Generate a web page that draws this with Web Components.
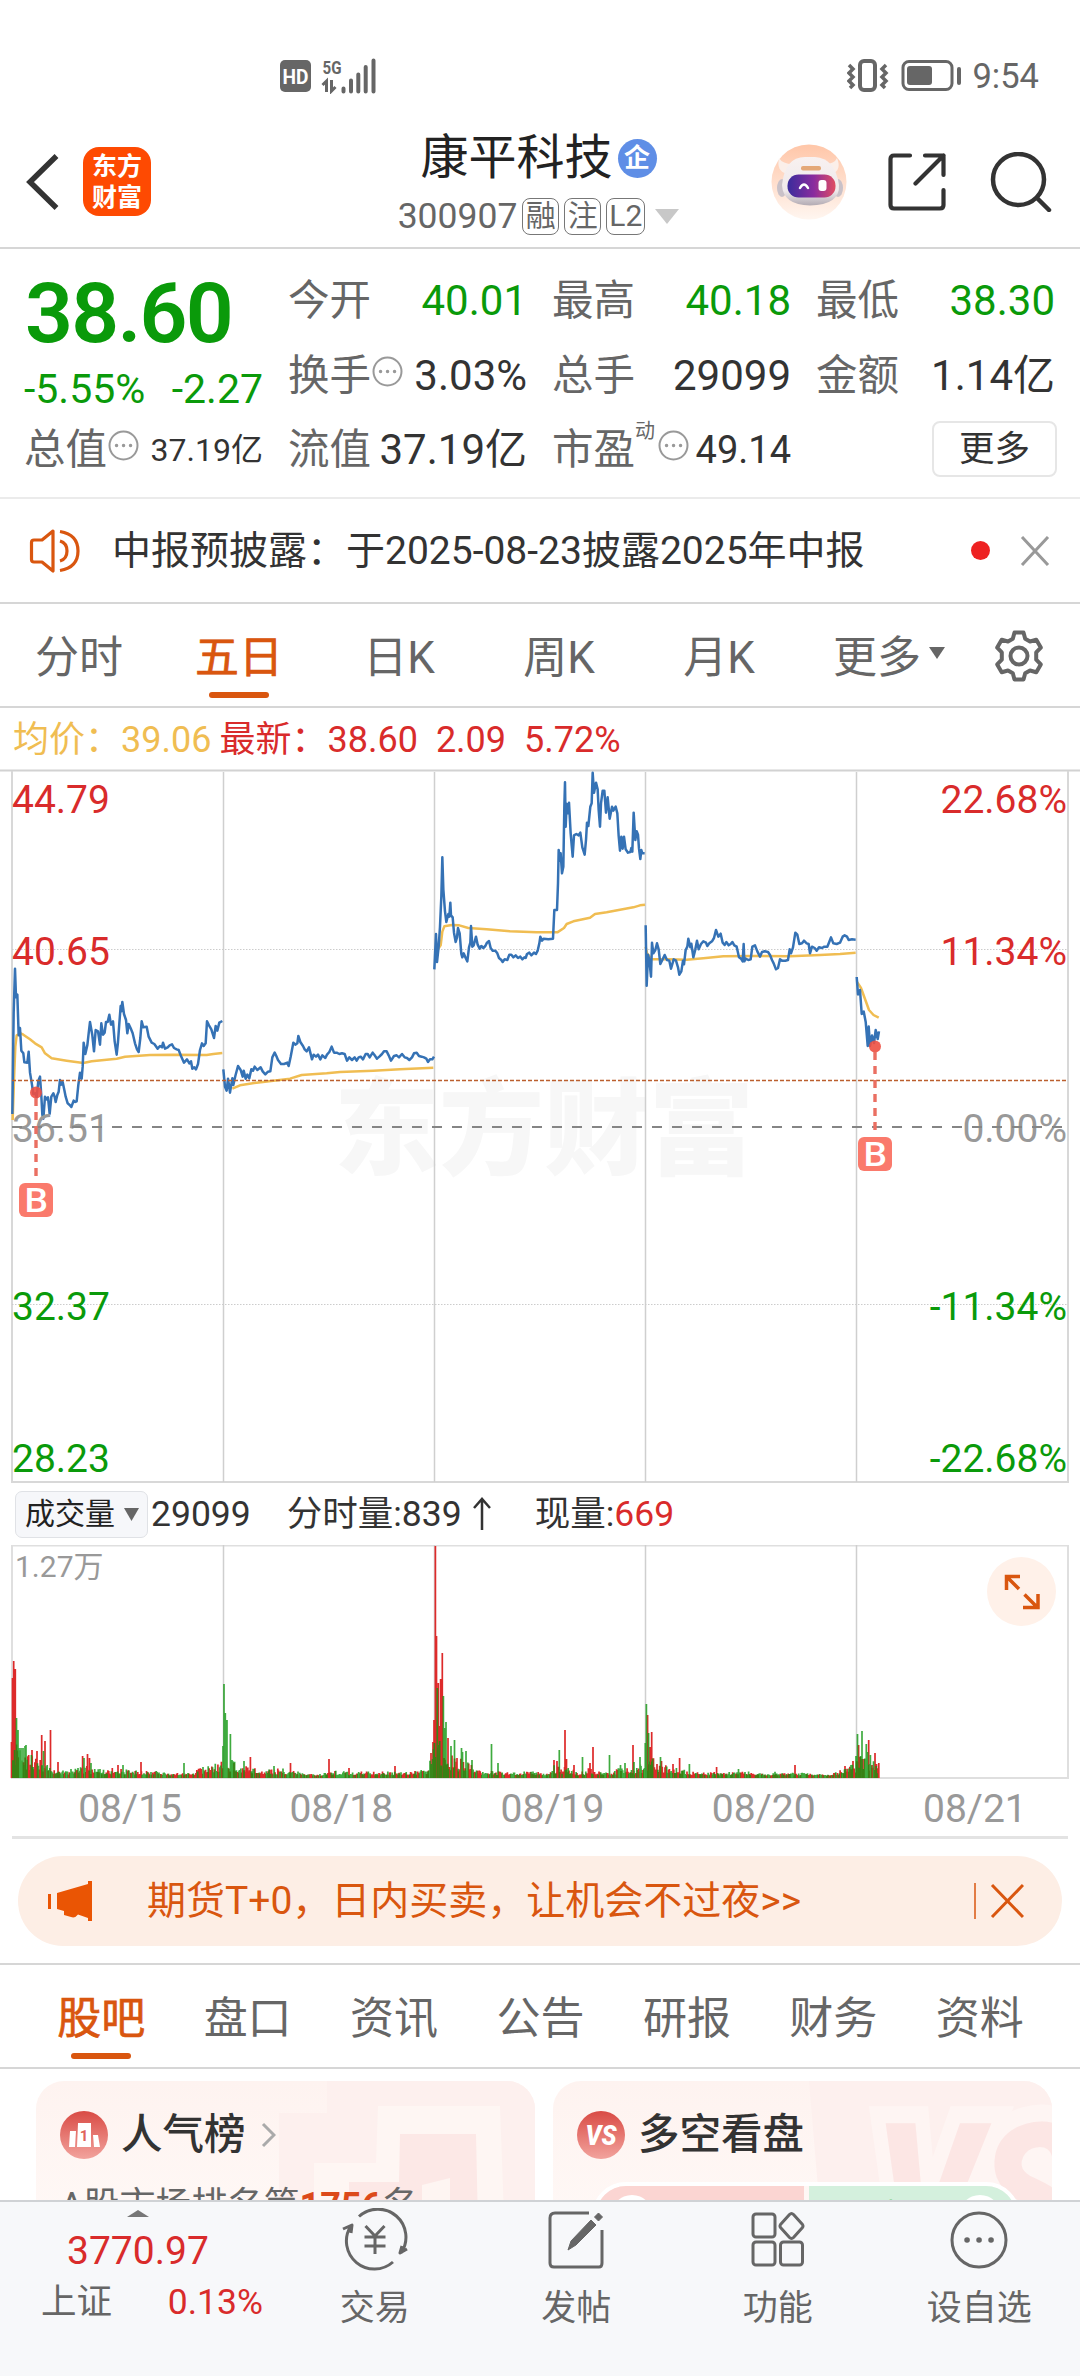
<!DOCTYPE html>
<html lang="zh-CN">
<head>
<meta charset="utf-8">
<title>康平科技 300907</title>
<style>
  :root {
    --up: #d92b2b;
    --down: #0a9a0a;
    --accent: #d9560f;
    --text: #333;
    --muted: #666;
    --faint: #999;
    --line: #d6d6d6;
    --avg: #f0bd52;
    --price: #3572b5;
  }
  body {
    margin: 0;
    width: 1080px;
    height: 2376px;
    overflow: hidden;
    display: flex;
    flex-direction: column;
    background: #fff;
    color: var(--text);
    font-family: Roboto, "Noto Sans CJK SC", sans-serif;
  }
  .cards {
    flex: 1;
    min-height: 0;
    overflow: hidden;
    display: flex;
    gap: 18px;
    padding: 12px 28px 0 36px;
  }
</style>
</head>
<body>
  <status-bar></status-bar>
  <stock-header code="300907">康平科技</stock-header>
  <quote-panel></quote-panel>
  <notice-bar>中报预披露：于2025-08-23披露2025年中报</notice-bar>
  <period-tabs></period-tabs>
  <price-chart></price-chart>
  <volume-chart></volume-chart>
  <promo-banner>期货T+0，日内买卖，让机会不过夜&gt;&gt;</promo-banner>
  <section-tabs></section-tabs>
  <section class="cards">
    <rank-card></rank-card>
    <versus-card></versus-card>
  </section>
  <market-nav></market-nav>

<script>
// Small helper: every element is a class with its own template and an open root.
function define(name, html, ready) {
  const template = document.createElement("template");
  template.innerHTML = html;

  customElements.define(
    name,
    class extends HTMLElement {
      connectedCallback() {
        if (this.shadowRoot) return;
        this.attachShadow({ mode: "open" });
        this.shadowRoot.appendChild(template.content.cloneNode(true));
        if (ready) ready(this, this.shadowRoot);
      }
    }
  );
}

define("status-bar", /* HTML */ `
  <style>
    :host {
      display: flex;
      justify-content: space-between;
      align-items: center;
      box-sizing: border-box;
      height: 120px;
      padding: 31px 41px 0 280px;
      color: var(--muted);
    }
    div { display: flex; align-items: center; }
    svg { display: block; }
    .right { gap: 10px; font-size: 34.500px; line-height: 40px; }
  </style>
  <div>
    <svg width="98" height="36" viewBox="0 0 98 36" fill="#666">
      <rect x="0" y="2" width="31" height="32" rx="5"/>
      <text x="15.5" y="25.500" font-size="20" font-weight="700" text-anchor="middle" fill="#fff" textLength="26" lengthAdjust="spacingAndGlyphs">HD</text>
      <text x="42.500" y="15.500" font-size="19" font-weight="700" textLength="19" lengthAdjust="spacingAndGlyphs">5G</text>
      <path d="M46.500 34V23l-4 4M51.500 22v11l4-4" fill="none" stroke="#666" stroke-width="3"/>
      <path d="M63.500 33.500v-3M71 33.500v-11M78.300 33.500v-17M85.700 33.500V9M93.500 33.500V2.500" stroke="#666" stroke-width="4" stroke-linecap="round"/>
    </svg>
  </div>
  <div class="right">
    <svg width="115" height="36" viewBox="0 0 115 36" fill="none" stroke="#666" stroke-width="3.500">
      <rect x="13" y="3" width="15" height="29" rx="4" stroke-width="4"/>
      <path d="M2 7l4 4-4 4 4 4-4 4 4 4-3 3M39 7l-4 4 4 4-4 4 4 4-4 4 3 3"/>
      <rect x="56" y="3.500" width="49" height="28" rx="6" stroke-width="3"/>
      <rect x="60" y="8" width="25" height="19" rx="3" fill="#666" stroke="none"/>
      <path d="M112 11v14" stroke-width="4" stroke-linecap="round"/>
    </svg>
    <span>9:54</span>
  </div>
`);

define("stock-header", /* HTML */ `
  <style>
    :host {
      display: grid;
      grid-template-columns: 1fr auto 1fr;
      box-sizing: border-box;
      height: 129px;
      padding: 0 28px 0 25px;
      border-bottom: 2px solid var(--line);
    }
    svg { display: block; }
    .side { display: flex; align-items: center; padding-bottom: 4px; }
    .right { justify-content: flex-end; }
    .logo {
      display: grid;
      place-content: center;
      width: 68px;
      height: 69px;
      margin-left: 24px;
      border-radius: 16px;
      background: #fe4a02;
      color: #fff;
      font-size: 25px;
      font-weight: 700;
      line-height: 31px;
    }
    .middle { padding: 8px 0 0 0; }
    .name, .meta { display: flex; align-items: center; justify-content: center; }
    .name { height: 60px; font-size: 48px; line-height: 60px; gap: 5px; color: #222; }
    .badge {
      width: 39px;
      height: 39px;
      border-radius: 50%;
      background: #5f8ee6;
      color: #fff;
      font-size: 26px;
      font-weight: 700;
      line-height: 38px;
      text-align: center;
    }
    .meta { height: 56px; gap: 5px; font-size: 35.500px; color: var(--muted); }
    .tag {
      box-sizing: border-box;
      height: 37px;
      min-width: 37px;
      border: 1.500px solid #777;
      border-radius: 8px;
      font-size: 30px;
      line-height: 34px;
      text-align: center;
      padding: 0 2px;
    }
  </style>
  <div class="side">
    <svg width="34" height="58" viewBox="0 0 34 58" fill="none" stroke="#333" stroke-width="5.500"><path d="M31.500 3L5 29l26.500 26"/></svg>
    <div class="logo"><span>东方</span><span>财富</span></div>
  </div>
  <div class="middle">
    <div class="name"><slot></slot><span class="badge">企</span></div>
    <div class="meta">
      <span class="code"></span><span class="tag">融</span><span class="tag">注</span><span class="tag">L2</span>
      <svg width="24" height="15" style="margin-left:5px"><path d="M0 0h24L12 15z" fill="#c8c8c8"/></svg>
    </div>
  </div>
  <div class="side right">
    <svg width="76" height="76" viewBox="0 0 76 76">
      <defs>
        <linearGradient id="halo" x2="0" y2="1"><stop offset="0" stop-color="#ffc6a8"/><stop offset="1" stop-color="#fff6f0"/></linearGradient>
        <linearGradient id="visor"><stop offset="0" stop-color="#3a2c9c"/><stop offset=".55" stop-color="#8a2c9e"/><stop offset="1" stop-color="#e04d62"/></linearGradient>
        <linearGradient id="shell" x2="0" y2="1"><stop offset="0" stop-color="#f8f1f0"/><stop offset=".7" stop-color="#efe9eb"/><stop offset="1" stop-color="#b3abb3"/></linearGradient>
      </defs>
      <circle cx="38" cy="38" r="37.500" fill="url(#halo)"/>
      <path d="M8 14q-3 13 8 16l9-10q-13 1-17-6zM66 14q5 12-5 16l-10-10q12 1 15-6z" fill="#fbefe9"/>
      <ellipse cx="11" cy="44" rx="5" ry="9" fill="#c9c1c8"/><ellipse cx="67" cy="44" rx="5" ry="9" fill="#c9c1c8"/>
      <path d="M11 41Q14 13 34 13h10q20 1 24 28 1 20-29 20.500Q12 61 11 41z" fill="url(#shell)"/>
      <rect x="30" y="22" width="20" height="4.500" rx="2" fill="#e4a878"/>
      <rect x="16.500" y="30.500" width="48" height="23" rx="11" fill="url(#visor)"/>
      <path d="M29 44q4-7 8 0" stroke="#fff" stroke-width="2.500" fill="none" stroke-linecap="round"/>
      <rect x="47.500" y="36" width="8" height="11" rx="3" fill="#fff"/>
    </svg>
    <svg width="58" height="58" viewBox="0 0 58 58" fill="none" stroke="#333" stroke-width="4.200" stroke-linecap="round" stroke-linejoin="round" style="margin-left:41px">
      <path d="M22 2.500H6Q2.500 2.500 2.500 6v46q0 3.500 3.500 3.500h46q3.500 0 3.500-3.500V37M37 2.500h18.500V22M55.500 2.500l-28 28"/>
    </svg>
    <svg width="62" height="60" viewBox="0 0 62 60" fill="none" stroke="#333" stroke-width="4.500" stroke-linecap="round" style="margin-left:44px">
      <circle cx="28.500" cy="27.500" r="25.500"/><path d="M47 46l12 12"/>
    </svg>
  </div>
`, (host, root) => {
  root.querySelector(".code").textContent = host.getAttribute("code");
});

define("info-dot", /* HTML */ `
  <style>
    :host { display: inline-block; width: 31px; height: 31px; }
    svg { display: block; }
  </style>
  <svg width="31" height="31" fill="none" stroke="#999" stroke-width="2">
    <circle cx="15.500" cy="15.500" r="14"/>
    <path d="M8.500 15.500h.1M15.500 15.500h.1M22.500 15.500h.1" stroke-width="3.400" stroke-linecap="round"/>
  </svg>
`);

define("quote-item", /* HTML */ `
  <style>
    :host { display: flex; align-items: center; font-size: 41.500px; line-height: 74px; white-space: nowrap; }
    .label { color: var(--muted); }
    sup { align-self: flex-start; font-size: 20px; line-height: 36px; margin-right: 2px; color: var(--muted); }
    info-dot { margin: -9px 0 0 1px; }
    .value { margin-left: auto; color: var(--value, var(--text)); font-size: var(--value-size, 42px); }
  </style>
  <span class="label"></span><span class="value"><slot></slot></span>
`, (host, root) => {
  const label = root.querySelector(".label");
  label.textContent = host.getAttribute("label");
  if (host.hasAttribute("hint")) label.after(document.createElement("info-dot"));
  if (host.hasAttribute("note")) {
    const sup = document.createElement("sup");
    sup.textContent = host.getAttribute("note");
    label.after(sup);
  }
});

define("quote-panel", /* HTML */ `
  <style>
    :host {
      display: grid;
      grid-template-columns: repeat(4, 239px);
      grid-template-rows: repeat(3, 74.500px);
      column-gap: 25px;
      box-sizing: border-box;
      height: 250px;
      padding: 15px 24px 0;
      border-bottom: 2px solid #ebebeb;
    }
    .now { grid-row: span 2; color: var(--down); }
    .price { font-size: 84px; font-weight: 600; line-height: 100px; letter-spacing: -1.800px; padding-left: 1px; }
    .change { display: flex; justify-content: space-between; font-size: 41px; line-height: 50px; }
    .down { --value: var(--down); }
    button {
      justify-self: end;
      align-self: center;
      width: 125px;
      height: 56px;
      margin-right: -2px;
      margin-top: -3px;
      padding: 0;
      border: 2px solid #e6e6e6;
      border-radius: 8px;
      background: #fff;
      color: var(--text);
      font: 35.500px/50px Roboto, "Noto Sans CJK SC", sans-serif;
    }
  </style>
  <div class="now">
    <div class="price">38.60</div>
    <div class="change"><span>-5.55%</span><span>-2.27</span></div>
  </div>
  <quote-item class="down" label="今开">40.01</quote-item>
  <quote-item class="down" label="最高">40.18</quote-item>
  <quote-item class="down" label="最低">38.30</quote-item>
  <quote-item label="换手" hint>3.03%</quote-item>
  <quote-item label="总手">29099</quote-item>
  <quote-item label="金额">1.14亿</quote-item>
  <quote-item label="总值" hint style="--value-size:32px">37.19亿</quote-item>
  <quote-item label="流值">37.19亿</quote-item>
  <quote-item label="市盈" note="动" hint style="--value-size:38px">49.14</quote-item>
  <button>更多</button>
`);

define("notice-bar", /* HTML */ `
  <style>
    :host {
      display: flex;
      align-items: center;
      box-sizing: border-box;
      height: 105px;
      padding: 0 30px 0 29px;
      border-bottom: 2px solid var(--line);
      font-size: 39px;
      line-height: 50px;
    }
    .text { flex: 1; margin-left: 31px; }
    i { width: 19px; height: 19px; border-radius: 50%; background: #ee2222; }
  </style>
  <svg width="52" height="46" viewBox="0 0 52 46" fill="none" stroke="#d9560f" stroke-width="3.200" stroke-linejoin="round">
    <path d="M24 3L13 12H5Q2.500 12 2.500 14.500v17Q2.500 34 5 34h8l11 9z"/>
    <path d="M31 13q7 2 7 10t-7 10M31 3.500q18 3 18 19.500T31 42.500"/>
  </svg>
  <span class="text"><slot></slot></span>
  <i></i>
  <svg width="30" height="30" fill="none" stroke="#999" stroke-width="3" style="margin-left:30px"><path d="M2 1l26 28M28 1L2 29"/></svg>
`);

define("tab-item", /* HTML */ `
  <style>
    :host {
      display: flex;
      flex-direction: column;
      align-items: center;
      justify-content: flex-end;
      font-size: 44px;
      line-height: 60px;
      color: var(--muted);
      white-space: nowrap;
    }
    :host([active]) { color: var(--accent); -webkit-text-stroke: .7px; }
    i { width: 60px; height: 6px; margin: 4px 0 8px; border-radius: 3px; }
    :host([active]) i { background: var(--accent); }
  </style>
  <span><slot></slot></span><i></i>
`);

define("period-tabs", /* HTML */ `
  <style>
    :host {
      display: grid;
      grid-template-columns: repeat(5, 160px) 180px 1fr;
      box-sizing: border-box;
      height: 104px;
      padding-right: 35px;
      border-bottom: 2px solid var(--line);
    }
    tab-item { margin-left: -2px; }
    .gear { justify-self: end; margin-top: 26px; }
  </style>
  <tab-item>分时</tab-item><tab-item active>五日</tab-item><tab-item>日K</tab-item><tab-item>周K</tab-item><tab-item>月K</tab-item>
  <tab-item>更多<svg width="16" height="12" style="margin:0 0 14px 8px"><path d="M0 0h16L8 12z" fill="#666"/></svg></tab-item>
  <svg class="gear" width="52" height="52" viewBox="0 0 52 52" fill="none" stroke="#666" stroke-width="4" stroke-linejoin="round">
    <path d="M21.500 2.500h9l1.700 6.300 4.800 2.700 6.300-1.700 4.500 7.800-4.600 4.700v7.400l4.600 4.700-4.500 7.800-6.300-1.700-4.800 2.700-1.700 6.300h-9l-1.700-6.300-4.800-2.700-6.300 1.700-4.500-7.800 4.600-4.700v-7.400l-4.600-4.700 4.500-7.800 6.300 1.700 4.800-2.700z"/>
    <circle cx="26" cy="26" r="8.500"/>
  </svg>
`);

// Intraday series, stored at three units per pixel so they keep sub-pixel detail.
const PRICE_A = "37,1062 41,760 45,626 48,712 52,704 56,826 60,804 64,872 70,880 73,907 82,908 86,875 90,938 95,968 100,1002 106,1000 110,1012 115,962 120,950 124,1008 127,1064 130,1076 135,1010 140,1018 144,1012 149,1062 154,1010 160,1000 164,1010 167,1026 172,1005 176,995 180,960 184,974 188,966 193,990 197,1010 203,1030 208,1034 214,1041 221,1022 226,1026 230,1024 235,975 240,938 245,956 248,920 251,848 256,882 262,856 266,820 270,786 277,826 282,874 287,810 294,814 300,854 304,790 309,824 314,818 318,786 323,786 328,764 333,794 339,784 344,844 350,884 354,846 358,790 362,738 364,754 367,726 372,762 378,780 382,820 386,792 392,805 398,820 405,850 411,868 416,876 421,834 425,784 430,802 440,800 446,830 455,848 463,852 473,866 480,858 486,862 489,848 495,866 503,862 509,856 516,853 522,864 530,868 536,870 543,888 552,908 561,898 568,910 573,904 577,926 583,922 588,928 594,912 600,870 606,850 611,858 617,850 621,784 627,796 634,808 642,834 647,798 652,812 658,788 667,783";
const PRICE_B = "670,928 675,980 680,992 684,956 690,998 697,955 700,975 706,948 714,918 722,930 728,950 731,932 737,956 742,944 748,955 754,928 759,932 764,920 772,930 782,922 788,934 796,943 804,935 811,934 817,892 824,878 829,888 834,900 843,912 852,912 862,908 866,918 872,890 880,848 886,854 892,850 895,828 901,846 909,858 914,868 920,874 927,862 936,898 941,884 948,890 954,884 961,898 967,886 976,894 981,884 988,876 995,860 1002,878 1010,878 1018,882 1026,880 1034,882 1041,902 1048,892 1056,900 1064,892 1070,902 1076,892 1082,890 1089,898 1097,882 1103,882 1109,892 1118,878 1124,886 1131,896 1138,890 1146,882 1152,874 1160,874 1166,886 1173,902 1182,888 1190,886 1197,892 1206,882 1214,892 1221,894 1228,900 1236,892 1242,880 1250,878 1257,888 1265,890 1272,892 1279,896 1284,906 1290,898 1297,898 1302,890";
const PRICE_C = "43,628 48,522 51,606 56,560 60,500 64,410 67,292 70,388 75,454 79,486 85,462 88,470 91,428 93,466 98,472 102,518 107,546 111,532 114,504 119,520 124,582 127,592 131,580 137,594 142,604 147,562 151,548 153,498 157,560 161,556 168,530 173,554 179,566 184,558 190,564 196,558 201,548 207,543 212,564 218,572 226,572 232,580 237,594 244,600 248,606 254,598 262,600 268,584 274,584 280,592 287,586 294,594 301,590 307,598 313,592 317,594 321,582 328,578 334,586 342,578 348,582 353,572 358,550 361,530 366,542 371,536 385,538 399,536 403,450 411,450 414,370 416,270 420,302 422,280 426,340 430,320 433,140 435,67 437,200 440,132 443,160 447,128 452,220 458,290 462,226 469,222 476,226 481,218 487,262 494,284 498,240 501,188 505,198 511,140 515,130 518,38 522,98 528,68 533,88 536,150 540,200 543,130 548,92 553,92 558,158 563,112 569,176 576,140 580,152 587,140 592,160 596,228 600,272 604,230 608,266 612,230 617,268 624,278 631,276 634,264 637,275 641,158 646,240 650,214 654,224 657,266 661,297 664,270 667,280 674,280";
const PRICE_D = "677,496 680,677 684,584 688,600 693,650 696,548 700,580 706,570 711,550 716,568 721,612 727,600 734,585 741,600 748,602 753,626 761,598 768,602 774,622 778,644 784,634 789,602 792,613 797,570 802,560 805,536 811,562 814,551 820,592 826,568 831,542 836,568 843,552 850,544 858,548 862,558 868,550 876,544 882,534 888,510 895,530 902,521 908,548 914,555 919,546 926,556 932,552 937,546 943,556 950,560 957,592 963,596 968,604 971,552 973,604 977,596 985,600 992,598 997,560 1005,556 1012,574 1020,590 1026,576 1034,574 1044,576 1050,585 1056,600 1061,610 1068,628 1074,624 1080,598 1086,602 1096,602 1104,600 1109,568 1113,580 1119,562 1126,518 1132,524 1138,552 1146,550 1152,542 1160,550 1166,552 1170,580 1176,560 1184,564 1190,572 1197,562 1206,564 1213,560 1222,560 1228,545 1233,532 1240,550 1250,552 1260,548 1268,530 1274,526 1281,530 1286,540 1296,538 1307,539";

define("price-chart", /* HTML */ `
  <style>
    :host { display: block; height: 775px; }
    .legend { display: flex; height: 61px; padding-left: 13px; font-size: 36px; line-height: 65px; color: var(--up); white-space: pre; }
    .legend span { margin-right: 18px; }
    .legend .avg { color: var(--avg); margin-right: 8px; }
    svg { display: block; }
    svg text { font-size: 39px; }
    .series polyline { fill: none; stroke-width: 2.500; vector-effect: non-scaling-stroke; stroke-linejoin: round; }
    .p { stroke: var(--price); }
    .a { stroke: var(--avg); }
  </style>
  <div class="legend"><span class="avg">均价：39.06</span><span>最新：38.60</span><span>2.09</span><span>5.72%</span></div>
  <svg width="1080" height="714" viewBox="0 769 1080 714">
    <text x="334" y="1166" style="font-size:105px" font-weight="900" fill="#f7f7f7" textLength="420">东方财富</text>
    <g fill="none" stroke="#d8d8d8" stroke-width="1.500">
      <path d="M0 770.500h1080" stroke="#d2d2d2" stroke-width="2"/>
      <path d="M12 771v711H1068V771" stroke-width="2"/>
      <path d="M223.500 772v710M434.500 772v710M645.500 772v710M856.500 772v710" stroke="#cfcfcf"/>
      <path d="M12 949.500H1068M12 1304.500H1068" stroke-dasharray="1.500 1.500" stroke="#ccc" stroke-width="1"/>
    </g>
    <g class="series">
      <g transform="translate(0 760) scale(.33333)">
        <polyline class="a" points="38,1080 42,960 46,860 50,826 62,820 70,824 90,838 105,850 125,862 135,880 155,895 200,902 250,909 275,904 320,899 350,896 375,890 450,885 520,884 620,885 640,882 667,879"/>
        <polyline class="a" points="697,986 720,976 770,968 820,962 870,956 905,945 980,940 1020,936 1120,932 1200,928 1300,923"/>
        <polyline class="p" points="${PRICE_A}"/>
        <polyline class="p" points="${PRICE_B}"/>
      </g>
      <g transform="translate(420 760) scale(.33333)">
        <polyline class="a" points="52,570 62,556 67,515 73,499 95,495 118,496 145,504 200,508 270,514 350,517 412,517 432,504 440,492 460,484 510,473 525,462 560,457 600,449 640,442 660,436 675,434"/>
        <polyline class="a" points="677,560 681,580 695,598 740,598 800,599 850,595 910,589 1000,588 1110,589 1200,585 1260,582 1307,578"/>
        <polyline class="p" points="${PRICE_C}"/>
        <polyline class="p" points="${PRICE_D}"/>
      </g>
      <polyline class="a" points="857,982 861,988 865,999 869,1010 873.500,1015 878.700,1017.700"/>
      <polyline class="p" points="856.700,977 858,994.500 860,990 861.700,1014 863.700,1011.500 865.700,1022 867.700,1046 868.700,1026.600 870,1046 872,1035.600 874,1043 875.700,1030 877.700,1039 879,1031.400"/>
    </g>
    <path d="M12 1080.500H1068" stroke="#bb5f2e" stroke-width="1.300" stroke-dasharray="4 2"/>
    <g fill="var(--up)"><text x="12" y="813">44.79</text><text x="12" y="965">40.65</text></g>
    <g fill="var(--faint)"><text x="12" y="1142">36.51</text><text x="1067" y="1142" text-anchor="end">0.00%</text></g>
    <g fill="var(--down)"><text x="12" y="1320">32.37</text><text x="12" y="1471.500">28.23</text></g>
    <g fill="var(--up)" text-anchor="end"><text x="1067" y="813">22.68%</text><text x="1067" y="965">11.34%</text></g>
    <g fill="var(--down)" text-anchor="end"><text x="1067" y="1320">-11.34%</text><text x="1067" y="1471.500">-22.68%</text></g>
    <path d="M12 1127H1068" stroke="#858585" stroke-width="1.800" stroke-dasharray="10 10"/>
    <g fill="#ed5042" fill-opacity=".9">
      <circle cx="36" cy="1092.500" r="6"/><circle cx="875" cy="1046.500" r="6"/>
      <path d="M36 1098v84M875 1052v84" stroke="#ea6f62" stroke-width="3.400" stroke-dasharray="8 6"/>
    </g>
    <g fill="#fa7a6c"><rect x="19" y="1183" width="34" height="34" rx="6"/><rect x="858" y="1137" width="34" height="34" rx="6"/></g>
    <g fill="#fff" font-weight="500"><text x="24.500" y="1212" style="font-size:34px" textLength="23.500" lengthAdjust="spacingAndGlyphs">B</text><text x="863.500" y="1166" style="font-size:34px" textLength="23.500" lengthAdjust="spacingAndGlyphs">B</text></g>
  </svg>
`);

// [x, height, colour] of the bars that stand out; the rest is filled from ENVELOPE.
const SPIKES = [
  [11.5,36,"r"],[12.5,100,"r"],[13.7,117,"r"],[15.3,109,"r"],[16.5,60,"g"],[18,48,"g"],[19,30,"g"],[21,30,"g"],[23,30,"g"],[25,32,"g"],[26,33,"g"],[32,28,"r"],[37,27,"r"],[41.7,43,"r"],[43.5,27,"g"],[45,37,"r"],[50.5,48,"r"],[58,16,"r"],
  [82.6,22,"r"],[84,20,"g"],[87.5,24,"r"],[89.5,20,"r"],[91,15,"g"],[118,13,"r"],[123,13,"g"],[141,16,"r"],[184,15,"g"],
  [223,32,"g"],[224,94,"g"],[225.3,65,"g"],[227,58,"g"],[230.4,44,"g"],[232,18,"g"],[234,15,"r"],[244,17,"g"],[250.4,21,"r"],[274,12,"g"],[290.5,15,"r"],[329,19,"r"],[349,10,"r"],[395,12,"r"],
  [431,25,"r"],[433,36,"r"],[434,58,"r"],[435.4,232,"r"],[436.5,142,"r"],[437.3,90,"g"],[438.3,95,"r"],[439.5,52,"r"],[440.6,99,"r"],[442.3,125,"r"],[443.4,82,"g"],[444.6,50,"g"],[446,56,"g"],[448,40,"r"],[451,32,"g"],[454.5,38,"g"],[457,20,"r"],[461.500,30,"g"],[462.500,26,"g"],[466,27,"g"],[472,18,"g"],[491.5,34,"g"],[498,15,"g"],
  [554,18,"r"],[557,17,"r"],[559.3,28,"g"],[565,48,"r"],[566.5,19,"r"],[574,13,"r"],[582.5,21,"g"],[590,15,"r"],[593,31,"r"],[609.5,23,"g"],[620.500,13,"g"],[625,15,"g"],[633,33,"r"],[634,16,"g"],[640,21,"g"],[641,12,"g"],
  [645.3,35,"g"],[646.4,74,"g"],[647.6,63,"r"],[648.6,45,"g"],[650,31,"r"],[651.7,46,"r"],[653,14,"r"],[657,14,"r"],[660.5,21,"g"],[661.5,17,"r"],[673,14,"r"],[679.6,20,"r"],[689.4,14,"g"],[716.6,11,"r"],[738.5,9,"g"],[795,13,"r"],[845,12,"r"],[851,13,"g"],[853,17,"r"],
  [856,22,"g"],[857.5,44,"g"],[858.6,33,"r"],[860.5,22,"g"],[862,47,"g"],[864,19,"r"],[866.3,34,"g"],[867.5,26,"g"],[868.7,38,"r"],[870.4,23,"g"],[872,13,"r"],[875,25,"r"],[876.5,14,"r"],[878.8,15,"r"]
];
const ENVELOPE = [[12,40],[17,38],[28,25],[45,16],[52,9],[60,6],[80,10],[90,11],[96,8],[120,9],[130,6],[160,6],[170,3],[190,4],[205,11],[222,18],[233,17],[245,12],[260,8],[290,8],[305,3],[318,2],[330,6],[350,5],[410,5],[427,8],[434,40],[444,42],[450,25],[468,15],[480,6],[540,5],[549,3],[553,12],[572,9],[580,4],[590,9],[600,5],[612,3],[620,12],[633,6],[640,12],[652,22],[665,12],[680,8],[692,5],[700,4],[730,5],[745,6],[765,3],[775,5],[785,4],[800,4],[830,2],[840,7],[855,14],[860,22],[870,22],[879,10]];

function envelopeAt(x) {
  for (let i = 1; i < ENVELOPE.length; i++) {
    const [x0, y0] = ENVELOPE[i - 1];
    const [x1, y1] = ENVELOPE[i];
    if (x <= x1) return y0 + (y1 - y0) * (x - x0) / (x1 - x0);
  }
  return 0;
}

define("volume-chart", /* HTML */ `
  <style>
    :host { display: block; height: 356px; }
    .head { display: flex; align-items: center; height: 62px; padding-left: 15px; font-size: 35.500px; line-height: 62px; white-space: nowrap; }
    .pill {
      box-sizing: border-box;
      display: flex;
      align-items: center;
      justify-content: space-between;
      width: 133px;
      height: 47px;
      margin-right: 3px;
      padding: 0 8px 0 9px;
      border: 1.500px solid #e0e2e6;
      border-radius: 7px;
      background: #f6f7fa;
      font-size: 30px;
      line-height: 44px;
      color: #222;
    }
    .minute { margin-left: 36px; }
    .minute svg { margin-left: 11px; vertical-align: -4px; }
    .last { margin-left: 44px; }
    b { font-weight: 400; color: var(--up); }
    svg { display: block; }
    .minute svg { display: inline-block; }
    .plot { position: relative; }
    .expand { position: absolute; right: 24px; top: 12px; }
    .dates {
      display: grid;
      grid-template-columns: repeat(5, 1fr);
      height: 57px;
      margin: 0 12px;
      border-bottom: 3px solid #e3e3e3;
      color: var(--faint);
      font-size: 39px;
      line-height: 61px;
      text-align: center;
    }
    .dates span { padding-left: 25px; }
  </style>
  <div class="head">
    <span class="pill">成交量<svg width="15" height="13"><path d="M0 0h15L7.500 13z" fill="#666"/></svg></span>29099
    <span class="minute">分时量:839<svg width="18" height="33" fill="none" stroke="#333" stroke-width="2.500"><path d="M9 33V2M1 11l8-9 8 9"/></svg></span>
    <span class="last">现量:<b>669</b></span>
  </div>
  <div class="plot">
    <svg width="1080" height="234" viewBox="0 1545 1080 234">
      <path d="M12 1545.500H1068V1778H12z" fill="none" stroke="#dfdfdf" stroke-width="2"/>
      <path d="M223.500 1545v233M434.500 1545v233M645.500 1545v233M856.500 1545v233" stroke="#cfcfcf" stroke-width="1.500"/>
      <text x="15" y="1577" font-size="30" fill="#999">1.27万</text>
      <g class="bars" stroke-width="1.700" fill="none"></g>
    </svg>
    <svg class="expand" width="69" height="69" fill="none" stroke="#d9560f" stroke-width="3.500">
      <circle cx="34.500" cy="34.500" r="34.500" fill="#fff1e9" stroke="none"/>
      <path d="M33 19.500H19.500V33M20 20l12 12M51 37v13.500H36M50 50L37.500 37.500"/>
    </svg>
  </div>
  <div class="dates"><span>08/15</span><span>08/18</span><span>08/19</span><span>08/20</span><span>08/21</span></div>
`, (host, root) => {
  const bars = [];
  let seed = 907;
  const random = () => (seed = (seed * 16807) % 2147483647) / 2147483647;
  for (let x = 12; x < 879; x += 0.88) {
    const height = 1.5 + envelopeAt(x) * (0.25 + 0.75 * random() ** 1.4);
    bars.push([x, height, random() < 0.5 ? "r" : "g"]);
  }
  bars.push(...SPIKES);
  for (const [key, color] of [["r", "#dd2a2a"], ["g", "#0f960f"]]) {
    const path = document.createElementNS("http://www.w3.org/2000/svg", "path");
    path.setAttribute("d", bars.filter((bar) => bar[2] === key)
      .map(([x, height]) => `M${x.toFixed(1)} 1778v${-height.toFixed(1)}`).join(""));
    path.setAttribute("stroke", color);
    path.setAttribute("stroke-opacity", key === "g" ? ".8" : "1");
    root.querySelector(".bars").append(path);
  }
});

define("promo-banner", /* HTML */ `
  <style>
    :host {
      display: block;
      box-sizing: border-box;
      height: 126px;
      padding: 17px 18px 0;
      border-bottom: 2px solid var(--line);
    }
    div {
      display: flex;
      align-items: center;
      box-sizing: border-box;
      height: 90px;
      padding: 0 38px 0 29px;
      border-radius: 45px;
      background: #fdeee5;
      color: var(--accent);
      font-size: 39px;
      line-height: 60px;
    }
    .text { flex: 1; margin: -1px 0 0 53px; white-space: nowrap; }
  </style>
  <div>
    <svg width="47" height="40" viewBox="0 0 47 40" fill="#ea5504">
      <path d="M1 13h3v15H1zM10 12L41 3V0h4v40h-4v-3l-10-3.500q-3 4-7 2.500l-7-2v-4l-7-2z"/>
    </svg>
    <span class="text"><slot></slot></span>
    <svg width="50" height="36" fill="none" stroke="#d9560f"><path d="M1 0v36" stroke-width="1.500"/><path d="M18 2l31 32M49 2L18 34" stroke-width="3"/></svg>
  </div>
`);

define("section-tabs", /* HTML */ `
  <style>
    :host {
      display: grid;
      grid-template-columns: repeat(7, 1fr);
      box-sizing: border-box;
      height: 104px;
      padding: 0 27px 0 28px;
      border-bottom: 2px solid var(--line);
    }
  </style>
  <tab-item active>股吧</tab-item><tab-item>盘口</tab-item><tab-item>资讯</tab-item><tab-item>公告</tab-item><tab-item>研报</tab-item><tab-item>财务</tab-item><tab-item>资料</tab-item>
`);

// Shared shell of the two teaser cards: backdrop, round icon, title, body.
define("teaser-card", /* HTML */ `
  <style>
    :host {
      display: grid;
      width: 499px;
      height: 190px;
      border-radius: 28px;
      overflow: hidden;
      background: linear-gradient(#fef3f0, #fffaf8);
    }
    ::slotted([slot="art"]), .content { grid-area: 1 / 1; }
    .title { display: flex; align-items: center; gap: 13px; height: 48px; padding: 30px 0 0 24px; font-size: 41.500px; font-weight: 500; line-height: 54px; }
    .body { padding: 22px 24px 0; }
  </style>
  <slot name="art"></slot>
  <div class="content">
    <div class="title"><slot name="title"></slot></div>
    <div class="body"><slot></slot></div>
  </div>
`);

define("rank-card", /* HTML */ `
  <style>
    :host { display: block; }
    svg { display: block; }
    p { margin: 0; font-size: 36px; line-height: 50px; color: var(--muted); white-space: nowrap; }
    b { color: #dc4a1a; font-weight: 700; }
  </style>
  <teaser-card>
    <svg slot="art" width="499" height="190">
      <path d="M291 0h208v190H243V32h48z" fill="#fdf0ee"/>
      <path d="M342 25h122l6 165H278V82h62z" fill="#fef6f3"/>
      <path d="M364 53h76l3 137H313v-89h50z" fill="#fce8e6"/>
      <path d="M386 104l28-7v93h-28z" fill="#fef5f2"/>
    </svg>
    <svg slot="title" width="48" height="48" viewBox="0 0 48 48">
      <defs><linearGradient id="g" x2="0" y2="1"><stop offset="0" stop-color="#d94b45"/><stop offset="1" stop-color="#f2a39d"/></linearGradient></defs>
      <circle cx="24" cy="24" r="24" fill="url(#g)"/>
      <path d="M10 20h6l-1 16H9zM18 12h13v24H17zM33 24h5l2 12h-6z" fill="#fff"/>
      <text x="24" y="30" font-size="15" font-weight="700" text-anchor="middle" fill="#e0635c">1</text>
    </svg>
    <span slot="title">人气榜</span>
    <svg slot="title" width="15" height="26" fill="none" stroke="#aaa" stroke-width="3" style="margin-left:2px"><path d="M2 2l11 11L2 24"/></svg>
    <p>A股市场排名第<b>1756</b>名</p>
  </teaser-card>
`);

define("versus-card", /* HTML */ `
  <style>
    :host { display: block; }
    svg { display: block; }
    .bar {
      display: flex;
      gap: 5px;
      height: 60px;
      margin: 1px 8px 0 15px;
      border: 4px solid #fff;
      border-radius: 34px;
      overflow: hidden;
      font-size: 32px;
      line-height: 56px;
    }
    .bar span { flex: 1; display: flex; align-items: center; gap: 58px; }
    .bar i { width: 42px; height: 42px; border-radius: 50%; background: #fff; }
    .bull { background: #fbd5d2; color: var(--up); padding-left: 15px; }
    .bear { background: #d4f0dd; color: var(--down); padding-right: 15px; justify-content: flex-end; }
  </style>
  <teaser-card>
    <svg slot="art" width="499" height="190">
      <path d="M256 0h243v190H272z" fill="#fdf0ee"/>
      <text x="322" y="182" font-size="196" font-weight="900" font-style="italic" textLength="204" lengthAdjust="spacingAndGlyphs" fill="#fce6e4" stroke="#fef5f3" stroke-width="34" paint-order="stroke">VS</text>
    </svg>
    <svg slot="title" width="48" height="48" viewBox="0 0 48 48">
      <defs><linearGradient id="g" x2="0" y2="1"><stop offset="0" stop-color="#d94b45"/><stop offset="1" stop-color="#f2a39d"/></linearGradient></defs>
      <circle cx="24" cy="24" r="24" fill="url(#g)"/>
      <text x="24" y="34" font-size="28" font-weight="900" font-style="italic" text-anchor="middle" fill="#fff" textLength="31" lengthAdjust="spacingAndGlyphs">VS</text>
    </svg>
    <span slot="title">多空看盘</span>
    <div class="bar"><span class="bull"><i></i>看涨</span><span class="bear">看跌<i></i></span></div>
  </teaser-card>
`);

define("nav-item", /* HTML */ `
  <style>
    :host { display: flex; flex-direction: column; align-items: center; flex: 1; font-size: 35px; line-height: 44px; color: var(--muted); }
    .icon { height: 64px; margin: 6px 0 15px; }
  </style>
  <div class="icon"><slot name="icon"></slot></div>
  <span><slot></slot></span>
`);

define("market-nav", /* HTML */ `
  <style>
    :host {
      display: flex;
      box-sizing: border-box;
      height: 176px;
      border-top: 2px solid #d0d2d5;
      background: #f7f8fa;
    }
    .index { width: 274px; color: var(--up); }
    .index > svg { display: block; margin: 8px auto 0 127px; }
    .value { padding-left: 67px; font-size: 39px; line-height: 50px; margin-top: 9px; }
    .row { display: flex; justify-content: space-between; padding: 0 11px 0 41px; font-size: 35.500px; line-height: 48px; margin-top: 2px; }
    .row span { color: var(--muted); }
    svg { display: block; fill: none; stroke: #666; stroke-width: 3; }
    nav-item svg { stroke-linejoin: round; }
  </style>
  <div class="index">
    <svg width="22" height="7"><path d="M0 7h22L11 0z" fill="#777" stroke="none"/></svg>
    <div class="value">3770.97</div>
    <div class="row"><span>上证</span>0.13%</div>
  </div>
  <nav-item>
    <svg slot="icon" width="68" height="64" viewBox="0 0 68 64">
      <path d="M18 8.500A28 28 0 0 1 60 45M52 54A28 28 0 0 1 9.500 18.500M2 21l9-4-1 8M66 41l-7 4 2-7"/>
      <path d="M24.500 18L34 28l9.500-10M34 28v18M23.500 29h21M23.500 38h21"/>
    </svg>交易
  </nav-item>
  <nav-item>
    <svg slot="icon" width="60" height="64" viewBox="0 0 60 64">
      <path d="M43 5H9Q4 5 4 10v45q0 4 4 4h45q3 0 3-4V22"/>
      <path d="M22 42l3-9L45 12l5 5-20 20zM48.500 9l4-4 4 4-4 4z" fill="#666" stroke-width="1"/>
    </svg>发帖
  </nav-item>
  <nav-item>
    <svg slot="icon" width="54" height="64" viewBox="0 0 54 64">
      <rect x="2" y="6" width="22" height="23" rx="3"/><rect x="2" y="34" width="22" height="23" rx="3"/><rect x="29.500" y="34" width="22" height="23" rx="3"/>
      <path d="M38.500 6.500q2-2 4 0l9 10q1 1.500 0 3l-9 10q-2 2-4 0l-9-10q-1-1.500 0-3z"/>
    </svg>功能
  </nav-item>
  <nav-item>
    <svg slot="icon" width="60" height="64" viewBox="0 0 60 64">
      <circle cx="30" cy="32" r="27"/>
      <path d="M18 32h.1M30 32h.1M42 32h.1" stroke-width="5.500" stroke-linecap="round"/>
    </svg>设自选
  </nav-item>
`);
</script>
</body>
</html>
